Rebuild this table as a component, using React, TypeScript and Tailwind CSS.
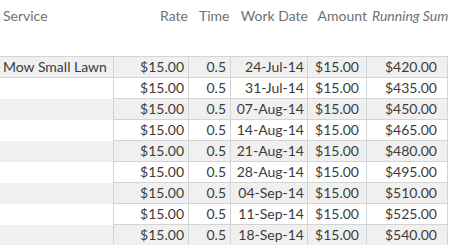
import React from "react";

const dates = [
  "24-Jul-14",
  "31-Jul-14",
  "07-Aug-14",
  "14-Aug-14",
  "21-Aug-14",
  "28-Aug-14",
  "04-Sep-14",
  "11-Sep-14",
  "18-Sep-14",
];
const sums = [
  "$420.00",
  "$435.00",
  "$450.00",
  "$465.00",
  "$480.00",
  "$495.00",
  "$510.00",
  "$525.00",
  "$540.00",
];

const cols = "grid grid-cols-[113px_76px_42px_77px_59px_81px]";

export default function App() {
  return (
    <div
      className="w-[450px] h-[245px] overflow-hidden bg-white text-[14px] leading-none"
      style={{ fontFamily: "Lato, 'Liberation Sans', sans-serif" }}
    >
      <div className={`${cols} h-[32px] items-center text-[#707070]`}>
        <div className="pl-[3px]">Service</div>
        <div className="text-right pr-[1px]">Rate</div>
        <div className="pl-[10px]">Time</div>
        <div className="text-right pr-[0px]">Work Date</div>
        <div className="text-right pr-[0px] -ml-[3px]">Amount</div>
        <div className="italic pl-[5px] whitespace-nowrap">Running Sum</div>
      </div>
      <div className="h-[24px]" />
      <div className="w-[448px] border-t border-[#d4d4d4]">
        {dates.map((d, i) => {
          const shade = i % 2 === 0 ? "bg-[#f0f0f0]" : "bg-white";
          const first = i === 0;
          return (
            <div key={d} className={`${cols} h-[21px] text-[#3c3c3c] ${shade}`}>
              <div
                className={`flex items-center pl-[3px] ${
                  first ? "border-b border-[#d4d4d4]" : ""
                }`}
              >
                {first ? "Mow Small Lawn" : ""}
              </div>
              <div className="flex items-center justify-end pr-[4px] border-l border-r border-b border-[#d4d4d4]">
                $15.00
              </div>
              <div className="flex items-center justify-end pr-[4px] border-r border-b border-[#d4d4d4]">
                0.5
              </div>
              <div className="flex items-center justify-end pr-[3px] border-r border-b border-[#d4d4d4]">
                {d}
              </div>
              <div className="flex items-center justify-center border-r border-b border-[#d4d4d4]">
                $15.00
              </div>
              <div className="flex items-center justify-end pr-[10px] border-r border-b border-[#d4d4d4]">
                {sums[i]}
              </div>
            </div>
          );
        })}
      </div>
    </div>
  );
}
